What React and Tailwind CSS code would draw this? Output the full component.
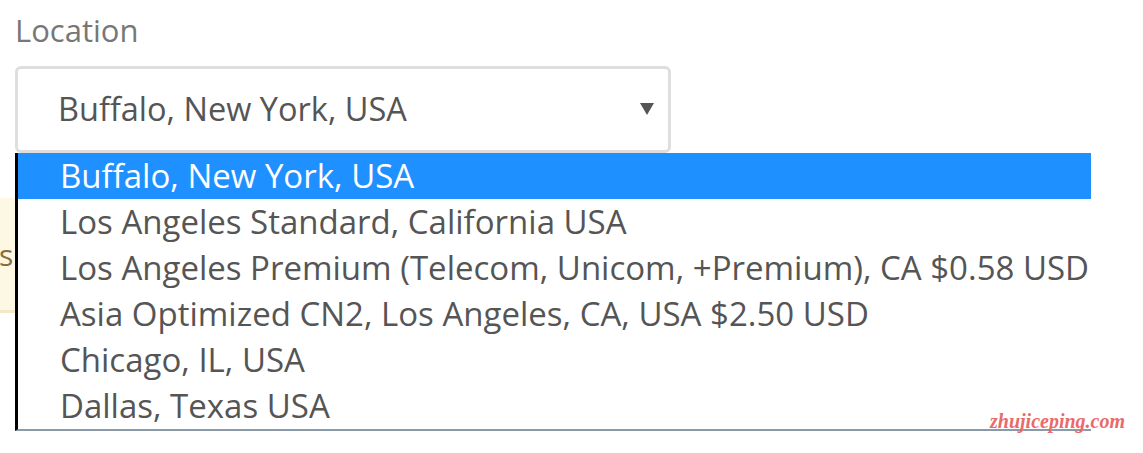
const options = [
  "Buffalo, New York, USA",
  "Los Angeles Standard, California USA",
  "Los Angeles Premium (Telecom, Unicom, +Premium), CA $0.58 USD",
  "Asia Optimized CN2, Los Angeles, CA, USA $2.50 USD",
  "Chicago, IL, USA",
  "Dallas, Texas USA",
];

export default function App() {
  return (
    <div className="relative h-[453px] w-[1143px] overflow-hidden bg-white font-['Open_Sans',sans-serif]">
      <div className="pl-[15px] pt-[9px]">
        <div className="text-[31px] leading-[42px] text-[#777]">Location</div>
        <div className="mt-[15px] flex h-[87px] w-[656px] items-center justify-between rounded-[6px] border-[3px] border-[#dedede] pl-[40px] pr-[14px]">
          <span className="text-[32.5px] text-[#555]">{options[0]}</span>
          <svg width="14" height="12" viewBox="0 0 14 12" className="mb-[2px]">
            <polygon points="0,0 14,0 7,12" fill="#555" />
          </svg>
        </div>
      </div>

      <div className="relative pt-[45px]">
        <div className="flex h-[115px] w-[400px] items-center border-b-[3px] border-[#f5e8c8] bg-[#fcf8e3]">
          <span className="-ml-[1px] text-[30px] text-[#8a6d3b]">s</span>
        </div>

        <div className="absolute left-[15px] top-0 w-[1076px] border-b-[2px] border-l-[3px] border-b-[#8a9aa8] border-l-black bg-white">
          {options.map((o, i) => (
            <div
              key={o}
              className={
                i === 0
                  ? "h-[46px] bg-[#1e90ff] pl-[42px] text-[33px] leading-[46px] whitespace-nowrap text-white"
                  : "h-[46px] pl-[42px] text-[33px] leading-[46px] whitespace-nowrap text-[#555]"
              }
            >
              {o}
            </div>
          ))}
        </div>
      </div>

      <div className="absolute left-[990px] top-[406px] font-['Liberation_Serif',serif] text-[20px] font-bold italic text-[#ea6a6a]">
        zhujiceping.com
      </div>
    </div>
  );
}
